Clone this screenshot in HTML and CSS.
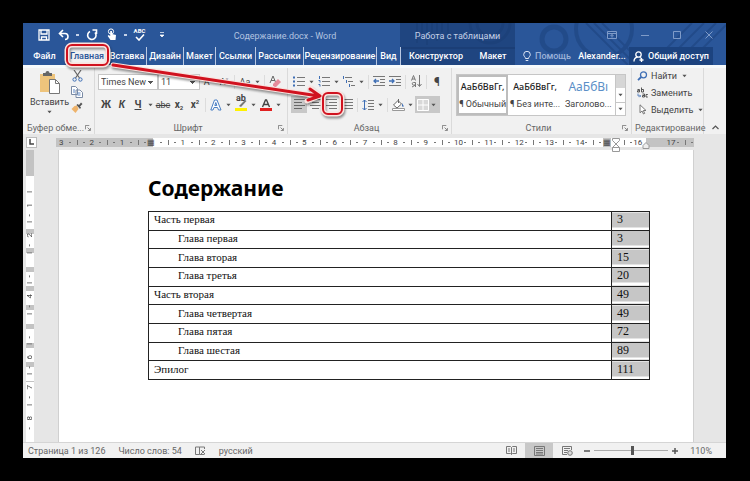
FILE: index.html
```
<!DOCTYPE html>
<html lang="ru">
<head>
    <meta charset="UTF-8">
    <meta name="viewport" content="width=device-width, initial-scale=1.0">
    <title>Содержание.docx - Word</title>
    <link rel="stylesheet" href="styles.css">
</head>
<body>
    <!-- Общие иконки -->
    <svg class="sprite" aria-hidden="true">
        <symbol id="down" viewBox="0 0 6 4"><path d="M0.5 0.5h5L3 3.5z" fill="#555"/></symbol>
        <symbol id="launcher" viewBox="0 0 7 7"><path d="M0.5 5V0.5H5M3 3l3 3M6.300 3.500v3h-3" fill="none" stroke="#777"/></symbol>
    </svg>

    <div class="window">
        <header class="header">
            <svg class="pattern" viewBox="0 0 326 42" aria-hidden="true">
                <g fill="none" stroke="#1e4480">
                    <path d="M17 0v20M22 0v14M27 0v22M32 0v12M37 0v18M42 0v9M48 0v16" stroke-width="2"/>
                    <path d="M70 0a20 20 0 0 0 40 0M77 0a13 13 0 0 0 26 0" stroke-width="3"/>
                    <circle cx="154" cy="16" r="12" stroke-width="5"/>
                    <circle cx="204" cy="6" r="28" stroke-width="4"/>
                    <path d="M186 0l42 42M194 0l42 42M202 0l42 42M250 42l42-42M262 42l42-42M274 42l42-42M286 42l40-40" stroke-width="2"/>
                </g>
            </svg>
            <div class="titlebar">
                <div class="quick">
                    <button aria-label="Сохранить"><svg width="12" height="12" viewBox="0 0 12 12"><path d="M1 1h10v10H1zM3 1v4h6V1M3.500 11V8h5v3" fill="none" stroke="#fff" stroke-width="1.300"/></svg></button>
                    <button aria-label="Отменить"><svg width="12" height="12" viewBox="0 0 12 12"><path d="M5 1L1.500 4.500 5 8M2 4.500h5a3 3 0 0 1 0 6" fill="none" stroke="#fff" stroke-width="1.600"/></svg></button>
                    <span class="dot"></span>
                    <button aria-label="Повторить"><svg width="12" height="12" viewBox="0 0 12 12"><path d="M4 2.500a4.200 4.200 0 1 0 5 1M6.500 1h4v4" fill="none" stroke="#fff" stroke-width="1.600"/></svg></button>
                    <button aria-label="Режим касания"><svg width="12" height="13" viewBox="0 0 12 13"><circle cx="5" cy="3.500" r="2.600" fill="none" stroke="#fff"/><path d="M4.200 3v5L2.500 7l-.8.9L4.500 12h5l.5-5-4-1V3z" fill="#fff"/></svg></button>
                    <span class="dot"></span>
                    <button class="spell" aria-label="Правописание">ABC<svg width="10" height="7" viewBox="0 0 10 7"><path d="M1 3l3 3 5-5.500" fill="none" stroke="#fff" stroke-width="1.600"/></svg></button>
                    <button class="more" aria-label="Настройка панели"><svg width="6" height="6" viewBox="0 0 6 6"><path d="M1 .5h4M1 3h4L3 5z" fill="#fff" stroke="#fff" stroke-width=".7"/></svg></button>
                </div>
                <h1 class="doc-title">Содержание.docx - Word</h1>
                <div class="context-title">Работа с таблицами</div>
                <div class="controls">
                    <button aria-label="Параметры ленты"><svg width="10" height="8" viewBox="0 0 10 8"><path d="M.5.5h9v7h-9zM.5 2.500h9M5 6.500v-3M3.500 5L5 3.500 6.500 5" fill="none" stroke="#7f9bc8"/></svg></button>
                    <button aria-label="Свернуть"><svg width="8" height="8" viewBox="0 0 8 8"><path d="M0 4.500h8" stroke="#7f9bc8"/></svg></button>
                    <button aria-label="Развернуть"><svg width="8" height="8" viewBox="0 0 8 8"><path d="M.5.5h7v7h-7z" fill="none" stroke="#7f9bc8"/></svg></button>
                    <button aria-label="Закрыть"><svg width="8" height="8" viewBox="0 0 8 8"><path d="M.5.5l7 7M7.500.5l-7 7" stroke="#7f9bc8"/></svg></button>
                </div>
            </div>
            <nav class="tabs">
                <button>Файл</button>
                <button class="active">Главная</button>
                <button class="line">Вставка</button>
                <button class="line">Дизайн</button>
                <button class="line">Макет</button>
                <button class="line">Ссылки</button>
                <button class="line">Рассылки</button>
                <button class="line">Рецензирование</button>
                <button class="line">Вид</button>
                <button class="context">Конструктор</button>
                <button class="context">Макет</button>
                <button class="help"><svg width="8" height="11" viewBox="0 0 8 11"><path d="M2.500 7.500C2.500 6 .7 5.500.7 3.600a3.300 3.300 0 0 1 6.600 0C7.300 5.500 5.500 6 5.500 7.500zM2.700 9.500h2.600" fill="none" stroke="#dfe7f5"/></svg>Помощь</button>
                <button>Alexander...</button>
                <button class="share"><svg width="11" height="11" viewBox="0 0 11 11"><circle cx="5.500" cy="3.500" r="2.700" fill="none" stroke="#fff" stroke-width="1.300"/><path d="M1 10.500c0-2.500 1.500-4 3.500-4.300M7 6.500l1.500 1M6.500 9h4M8.500 7v4" fill="none" stroke="#fff" stroke-width="1.300"/></svg>Общий доступ</button>
            </nav>
        </header>

        <section class="ribbon">
            <div class="group">
                <div class="clipboard">
                    <button class="paste">
                        <svg width="22" height="24" viewBox="0 0 22 24"><path d="M1 4h15v18H1z" fill="#eec47c"/><path d="M4 6V3h2.500a2 2 0 0 1 4 0H13v3z" fill="#666"/><path d="M10.500 9.500h6l4 4v10h-10z" fill="#fff" stroke="#777"/><path d="M16.500 9.500v4h4" fill="none" stroke="#777"/></svg>
                        Вставить
                        <svg class="arr"><use href="#down"/></svg>
                    </button>
                    <div class="clip-tools">
                        <button aria-label="Вырезать"><svg width="11" height="12" viewBox="0 0 11 12"><path d="M2 0l5.500 8M9 0L3.500 8" stroke="#666" stroke-width="1.200"/><circle cx="2.600" cy="9.500" r="1.700" fill="none" stroke="#3f6fb5"/><circle cx="8.400" cy="9.500" r="1.700" fill="none" stroke="#3f6fb5"/></svg></button>
                        <button aria-label="Копировать"><svg width="12" height="12" viewBox="0 0 12 12"><path d="M.5.500h4l2 2v6h-6zM5 4h4l2.500 2.500v5H5z" fill="#fff" stroke="#7a8ba5"/><path d="M2 4h2M2 6h2M6.500 7h3M6.500 9h3" stroke="#5b86c4"/></svg></button>
                        <button aria-label="Формат по образцу"><svg width="12" height="11" viewBox="0 0 12 11"><path d="M6 3.500L3.500 4 .5 7l4 4 3-4z" fill="#eeb36b"/><path d="M5.500 3l3.500 4 1-1.500-1-1L11.500 2 10 .5 8 3 6.500 2z" fill="#555"/></svg></button>
                    </div>
                </div>
                <div class="group-name"><span>Буфер обме...</span><svg class="launch"><use href="#launcher"/></svg></div>
            </div>

            <div class="group">
                <div class="rows">
                    <div class="row">
                        <select class="font-name" aria-label="Шрифт"><option>Times New Roman</option></select>
                        <select class="font-size" aria-label="Размер"><option>11</option></select>
                        <button class="tool" aria-label="Увеличить размер">А&#x2c4;</button>
                        <button class="tool" aria-label="Уменьшить размер">А&#x2c5;</button>
                        <span class="sep"></span>
                        <button class="tool" aria-label="Регистр">Аа</button>
                        <svg class="arr"><use href="#down"/></svg>
                        <span class="sep"></span>
                        <button class="tool" aria-label="Очистить форматирование"><svg width="13" height="13" viewBox="0 0 13 13"><path d="M1 8L4 1l2.500 6M2 5.500h4" fill="none" stroke="#666"/><path d="M4 9l5-5 3 3-5 5H5.500L4 10.500z" fill="#e58b9b"/></svg></button>
                    </div>
                    <div class="row">
                        <button class="tool bold">Ж</button>
                        <button class="tool bold italic">К</button>
                        <button class="tool bold under">Ч</button>
                        <svg class="arr"><use href="#down"/></svg>
                        <button class="tool strike">abc</button>
                        <button class="tool bold">x<sub>2</sub></button>
                        <button class="tool bold">x<sup>2</sup></button>
                        <span class="sep"></span>
                        <button class="tool" aria-label="Эффекты"><svg width="12" height="12" viewBox="0 0 12 12"><path d="M.8 11L4.500 1h2.500l4 10H8.500l-1-2.500H4L3 11zM4.800 6.500h2L5.800 3.500z" fill="#fff" stroke="#4a7fc4"/></svg></button>
                        <svg class="arr"><use href="#down"/></svg>
                        <button class="tool marker" aria-label="Цвет выделения">ab<svg width="12" height="12" viewBox="0 0 12 12"><path d="M4 7l6-6 1.500 1L6 8z" fill="#777"/><path d="M0 9h12v3H0z" fill="#fff200"/></svg></button>
                        <svg class="arr"><use href="#down"/></svg>
                        <button class="tool" aria-label="Цвет текста"><svg width="12" height="12" viewBox="0 0 12 12"><path d="M2.500 8L5.500 1h1L9.500 8M3.500 5.500h5" fill="none" stroke="#444" stroke-width="1.400"/><path d="M0 9h12v3H0z" fill="#e02020"/></svg></button>
                        <svg class="arr"><use href="#down"/></svg>
                    </div>
                </div>
                <div class="group-name"><span>Шрифт</span><svg class="launch"><use href="#launcher"/></svg></div>
            </div>

            <div class="group">
                <div class="rows">
                    <div class="row">
                        <button class="tool" aria-label="Маркеры"><svg width="12" height="11" viewBox="0 0 12 11"><path d="M0 1.500h2M0 5.500h2M0 9.500h2" stroke="#3f6fb5" stroke-width="2"/><path d="M4 1.500h8M4 5.500h8M4 9.500h8" stroke="#777"/></svg></button>
                        <svg class="arr"><use href="#down"/></svg>
                        <button class="tool" aria-label="Нумерация"><svg width="12" height="11" viewBox="0 0 12 11"><path d="M1.500 0v3M.5 4.500h1.500v2M.5 8.500h1.500v2" fill="none" stroke="#3f6fb5"/><path d="M4 1.500h8M4 5.500h8M4 9.500h8" stroke="#777"/></svg></button>
                        <svg class="arr"><use href="#down"/></svg>
                        <button class="tool" aria-label="Многоуровневый список"><svg width="12" height="11" viewBox="0 0 12 11"><path d="M.5 0v3M3.500 4v3M6.500 8v3" stroke="#3f6fb5"/><path d="M2 1.500h7M5 5.500h5M8 9.500h4" stroke="#777"/></svg></button>
                        <svg class="arr"><use href="#down"/></svg>
                        <span class="sep"></span>
                        <button class="tool" aria-label="Уменьшить отступ"><svg width="12" height="11" viewBox="0 0 12 11"><path d="M0 .5h12M7 3.500h5M7 6.500h5M0 9.500h12" stroke="#777"/><path d="M6 5H1M3 3L1 5l2 2" fill="none" stroke="#3f6fb5" stroke-width="1.300"/></svg></button>
                        <button class="tool" aria-label="Увеличить отступ"><svg width="12" height="11" viewBox="0 0 12 11"><path d="M0 .5h12M7 3.500h5M7 6.500h5M0 9.500h12" stroke="#777"/><path d="M0 5h5M3 3l2 2-2 2" fill="none" stroke="#3f6fb5" stroke-width="1.300"/></svg></button>
                        <span class="sep"></span>
                        <button class="tool" aria-label="Сортировка"><svg width="11" height="13" viewBox="0 0 11 13"><path d="M.5 5.500L2.500.5l2 5M1 4h3M4.500 12V7.500H2.500a1.200 1.200 0 0 0 0 2.500h2L1 12" fill="none" stroke="#777"/><path d="M8.500 0v11M6.500 9l2 2.500 2-2.500" fill="none" stroke="#777"/></svg></button>
                        <span class="sep"></span>
                        <button class="tool pilcrow">¶</button>
                    </div>
                    <div class="row">
                        <button class="tool pressed" aria-label="По левому краю"><svg width="11" height="11" viewBox="0 0 11 11"><path d="M0 .5h11M0 3.500h8M0 6.500h11M0 9.500h8" stroke="#666"/></svg></button>
                        <button class="tool" aria-label="По центру"><svg width="11" height="11" viewBox="0 0 11 11"><path d="M0 .5h11M2 3.500h7M0 6.500h11M2 9.500h7" stroke="#777"/></svg></button>
                        <button class="tool" aria-label="По правому краю"><svg width="11" height="11" viewBox="0 0 11 11"><path d="M0 .5h11M3 3.500h8M0 6.500h11M3 9.500h8" stroke="#777"/></svg></button>
                        <button class="tool" aria-label="По ширине"><svg width="11" height="11" viewBox="0 0 11 11"><path d="M0 .5h11M0 3.500h11M0 6.500h11M0 9.500h11" stroke="#777"/></svg></button>
                        <span class="sep"></span>
                        <button class="tool" aria-label="Интервал"><svg width="12" height="12" viewBox="0 0 12 12"><path d="M2.500 1v10M.5 3l2-2 2 2M.5 9l2 2 2-2" fill="none" stroke="#3f6fb5"/><path d="M6 1.500h6M6 4.500h6M6 7.500h6M6 10.500h6" stroke="#777"/></svg></button>
                        <svg class="arr"><use href="#down"/></svg>
                        <span class="sep"></span>
                        <button class="tool" aria-label="Заливка"><svg width="13" height="12" viewBox="0 0 13 12"><path d="M6 1.500L1.500 6l3.500 3L9.500 5zM6.500 0v4" fill="#fff" stroke="#666"/><path d="M10 4l2 3.500h-2z" fill="#3f6fb5"/><path d="M.5 9.500h12v2H.5z" fill="#fff" stroke="#999"/></svg></button>
                        <svg class="arr"><use href="#down"/></svg>
                        <button class="tool pressed borders" aria-label="Границы"><svg width="12" height="12" viewBox="0 0 12 12"><path d="M0 0h12v12H0z" fill="#d8d8d8"/><path d="M.5.500h11v11H.5zM6 1v10M1 6h10" fill="none" stroke="#fff"/></svg><svg class="arr"><use href="#down"/></svg></button>
                    </div>
                </div>
                <div class="group-name"><span>Абзац</span><svg class="launch"><use href="#launcher"/></svg></div>
            </div>

            <div class="group">
                <div class="gallery">
                    <button class="style selected"><b>АаБбВвГг,</b><span>¶ Обычный</span></button>
                    <button class="style"><b>АаБбВвГг,</b><span>¶ Без инте...</span></button>
                    <button class="style heading"><b>АаБбВı</b><span>Заголово...</span></button>
                    <div class="gallery-scroll">
                        <button disabled aria-label="Вверх"></button>
                        <button aria-label="Вниз"><svg class="arr"><use href="#down"/></svg></button>
                        <button class="all" aria-label="Все стили"><svg class="arr"><use href="#down"/></svg></button>
                    </div>
                </div>
                <div class="group-name"><span>Стили</span><svg class="launch"><use href="#launcher"/></svg></div>
            </div>

            <div class="group">
                <div class="editing">
                    <button><svg width="11" height="10" viewBox="0 0 11 10"><circle cx="6.500" cy="3.800" r="3" fill="none" stroke="#3f6fb5" stroke-width="1.300"/><path d="M4.200 6L1 9.200" stroke="#3f6fb5" stroke-width="1.800"/></svg>Найти<svg class="arr"><use href="#down"/></svg></button>
                    <button><svg width="11" height="11" viewBox="0 0 11 11"><path d="M.5 2.500h2v2.500h-2V3.700h2M4.500.500V5h2V2.500h-2M5.500 7h2v3h-2V8.500h2M10.800 7.500H9v2.500h1.800" fill="none" stroke="#555"/><path d="M1 6.500V9h2.500M2.500 7.800L3.700 9 2.500 10.200" fill="none" stroke="#3f6fb5" stroke-width=".8"/></svg>Заменить</button>
                    <button><svg width="11" height="11" viewBox="0 0 11 11"><path d="M3 .8v8l2-1.800 1.500 3 1.200-.6-1.400-2.900h2.700z" fill="#fff" stroke="#777"/></svg>Выделить<svg class="arr"><use href="#down"/></svg></button>
                </div>
                <div class="group-name"><span>Редактирование</span></div>
            </div>

            <button class="collapse" aria-label="Свернуть ленту"><svg width="7" height="5" viewBox="0 0 7 5"><path d="M.5 4l3-3 3 3" fill="none" stroke="#555" stroke-width="1.200"/></svg></button>
        </section>

        <div class="ruler-bar">
            <span class="corner"><svg width="6" height="6" viewBox="0 0 6 6"><path d="M1 0v5h4" fill="none" stroke="#444" stroke-width="1.500"/></svg></span>
            <div class="ruler">
                <span class="out">3</span><span class="out">2</span><span class="out">1</span><span class="zero">▦</span>
                <span>1</span><span>2</span><span>3</span><span>4</span><span>5</span><span>6</span><span>7</span><span>8</span><span>9</span><span>10</span><span>11</span><span>12</span><span>13</span><span>14</span><span class="column">▦<svg class="indent" viewBox="0 0 8 14"><path d="M.5.5h7v2L4 6 .5 2.500zM4 6l3.500 3.500v4h-7v-4zM.5 9.500h7" fill="#fff" stroke="#999"/></svg></span><span class="edge">16<svg class="indent" viewBox="0 0 8 14"><path d="M4 4.500l3 3v3H1v-3z" fill="#eee" stroke="#999"/></svg></span><span class="out">17</span>
            </div>
        </div>

        <main class="work">
            <div class="vruler">
                <div class="row-marks"></div>
                <span class="top"></span>
                <span>1</span><span>2</span><span></span><span>4</span><span></span><span>6</span><span>7</span><span>8</span>
            </div>
            <article class="page">
                <h2>Содержание</h2>
                <table class="toc">
                    <tr><td>Часть первая</td><td class="num">3</td></tr>
                    <tr><td class="sub">Глава первая</td><td class="num">3</td></tr>
                    <tr><td class="sub">Глава вторая</td><td class="num">15</td></tr>
                    <tr><td class="sub">Глава третья</td><td class="num">20</td></tr>
                    <tr><td>Часть вторая</td><td class="num">49</td></tr>
                    <tr><td class="sub">Глава четвертая</td><td class="num">49</td></tr>
                    <tr><td class="sub">Глава пятая</td><td class="num">72</td></tr>
                    <tr><td class="sub">Глава шестая</td><td class="num">89</td></tr>
                    <tr><td>Эпилог</td><td class="num">111</td></tr>
                </table>
            </article>
        </main>

        <footer class="status">
            <span>Страница 1 из 126</span>
            <span>Число слов: 54</span>
            <svg width="11" height="10" viewBox="0 0 11 10"><path d="M.5 1h4v7.500h-4zM4.500 1h5v2M4.500 8.500h5M6 4l4 4M10 4L6 8" fill="none" stroke="#777"/></svg>
            <span>русский</span>
            <div class="views">
                <button aria-label="Режим чтения"><svg width="11" height="9" viewBox="0 0 11 9"><path d="M.5.500h4l1 1 1-1h4v7h-4l-1 1-1-1h-4zM5.500 1.500v7M2 3h2M2 5h2M7 3h2M7 5h2" fill="none" stroke="#777"/></svg></button>
                <button class="on" aria-label="Разметка страницы"><svg width="11" height="10" viewBox="0 0 11 10"><path d="M.5.500h10v9H.5zM2 2.500h7M2 4.500h7M2 6.500h7M2 8h7" fill="none" stroke="#777"/></svg></button>
                <button aria-label="Веб-документ"><svg width="11" height="10" viewBox="0 0 11 10"><path d="M5 8.500H.5v-8h9V4M2 2.500h6M2 4.500h4M2 6.500h3" fill="none" stroke="#777"/><circle cx="8" cy="7" r="2.300" fill="#ddd" stroke="#777"/></svg></button>
            </div>
            <div class="zoom">
                <button aria-label="Уменьшить"><svg width="6" height="6" viewBox="0 0 6 6"><path d="M0 3h6" stroke="#555" stroke-width="1.500"/></svg></button>
                <input type="range" min="0" max="100" value="52" aria-label="Масштаб">
                <button aria-label="Увеличить"><svg width="6" height="6" viewBox="0 0 6 6"><path d="M0 3h6M3 0v6" stroke="#555" stroke-width="1.500"/></svg></button>
                <span>110%</span>
            </div>
        </footer>

        <!-- Подсказка: рамки и стрелка поверх окна -->
        <svg class="hint" width="340" height="110" viewBox="0 0 340 110" aria-hidden="true">
            <g fill="none" stroke-linecap="round" stroke-linejoin="round">
                <g stroke="#fbe3df" stroke-width="5">
                    <rect x="44" y="22" width="41" height="20" rx="5"/>
                    <rect x="300" y="70" width="19" height="21" rx="5"/>
                    <path d="M90 42L296 73M287 65l10 8-13 5"/>
                </g>
                <g stroke="#d0121f" stroke-width="2">
                    <rect x="44" y="22" width="41" height="20" rx="5"/>
                    <rect x="300" y="70" width="19" height="21" rx="5"/>
                    <path d="M90 42L296 73M287 66l10 7-12 4" stroke-width="3"/>
                </g>
            </g>
        </svg>
    </div>
</body>
</html>
```
FILE: styles.css
```
* {
    box-sizing: border-box;
    margin: 0;
    padding: 0;
}

body {
    background: #000;
    min-height: 100vh;
    padding: 23px 24px 23px 23px;
    display: flex;
    font-family: Roboto, "Noto Sans", sans-serif;
    font-size: 9px;
    line-height: 12px;
    color: #444;
}

button, select, input {
    font: inherit;
    color: inherit;
    background: none;
    border: none;
}

button {
    display: flex;
    align-items: center;
    justify-content: center;
    white-space: nowrap;
}

svg {
    flex: none;
}

.sprite {
    position: absolute;
    width: 0;
    height: 0;
}

.window {
    flex: 1;
    min-width: 0;
    display: flex;
    flex-direction: column;
    position: relative;
    background: #e6e6e6;
}

/* Заголовок и вкладки */
.header {
    position: relative;
    background: #2a5699;
    color: #fff;
}

.pattern {
    position: absolute;
    right: 0;
    top: 0;
    width: 326px;
    height: 42px;
    opacity: 0.6;
}

.titlebar, .tabs {
    position: relative;
    display: grid;
}

.titlebar {
    grid-template-columns: 158fr 219fr 115fr 211fr;
    height: 24px;
}

.quick {
    display: flex;
    align-items: center;
    gap: 5px;
    padding: 0 0 3px 13px;
}

.quick button {
    width: 15px;
}

.quick .more {
    margin-left: 2px;
}

.quick .spell {
    flex-direction: column;
    font-size: 6px;
    line-height: 6px;
    font-weight: bold;
}

.dot {
    width: 3px;
    height: 2px;
    background: #c5d2e8;
}

.doc-title {
    font-size: 9px;
    font-weight: normal;
    line-height: 26px;
    text-align: center;
    padding-right: 11px;
    color: #b3c4e0;
}

.context-title {
    background: rgba(25, 58, 112, 0.6);
    line-height: 26px;
    text-align: center;
    color: #c3d0e6;
}

.controls {
    display: flex;
    align-items: center;
    justify-content: flex-end;
    gap: 24px;
    padding: 0 13px 2px 0;
}

.tabs {
    grid-template-columns: 43fr 42fr 39fr 37fr 32fr 40fr 48fr 73fr 24fr 70fr 44fr 60fr 54fr 84fr 13fr;
    height: 18px;
}

.tabs button {
    min-width: 0;
    font-weight: 500;
}

.tabs .active {
    background: #f1f1f1;
    color: #2a5699;
}

.tabs .line {
    border-right: 1px solid #b9c8e2;
}

.tabs .context {
    background: rgba(25, 58, 112, 0.6);
}

.tabs .help {
    gap: 4px;
    padding-left: 8px;
    justify-content: flex-start;
    color: #9db3d8;
}

.tabs .share {
    background: #1c437f;
    gap: 4px;
}

/* Лента */
.ribbon {
    display: grid;
    grid-template-columns: 72fr 193fr 164fr 180fr 72fr 22fr;
    background: #f1f1f1;
    border-top: 3px solid #f6fafc;
    height: 69px;
}

.group {
    display: flex;
    flex-direction: column;
    min-width: 0;
    border-right: 1px solid #dadada;
}

.group-name {
    display: flex;
    align-items: center;
    color: #666;
    margin-top: auto;
    padding: 0 3px;
}

.group-name span {
    flex: 1;
    text-align: center;
    white-space: nowrap;
}

.launch {
    width: 6px;
    height: 6px;
}

.arr {
    width: 5px;
    height: 4px;
    margin: 0 2px;
}

.clipboard {
    display: flex;
    padding: 2px 7px 0 7px;
    justify-content: space-between;
}

.paste {
    flex-direction: column;
    gap: 2px;
}

.clip-tools {
    display: flex;
    flex-direction: column;
    gap: 4px;
    padding-right: 4px;
}

.rows {
    display: flex;
    flex-direction: column;
    gap: 6px;
    padding: 5px 0 0 3px;
}

.row {
    display: flex;
    align-items: center;
    height: 17px;
}

.tool {
    width: 16px;
    height: 17px;
    flex: none;
}

.pressed {
    background: #c8c8c8;
}

.borders {
    width: 25px;
}

.pilcrow {
    font-size: 12px;
}

.sep {
    width: 1px;
    height: 14px;
    margin: 0 2px;
    background: #dcdcdc;
}

.bold {
    font-size: 10px;
    font-weight: bold;
}

.italic {
    font-style: italic;
}

.under {
    text-decoration: underline;
}

.strike {
    text-decoration: line-through;
}

.tool sub, .tool sup {
    font-size: 6px;
    line-height: 6px;
}

.tool sub {
    padding-top: 6px;
}

.tool sup {
    padding-bottom: 6px;
}

.marker {
    display: grid;
    align-content: start;
    justify-items: center;
    grid-template-rows: 3px 12px;
    font-weight: bold;
    line-height: 10px;
}

.font-name, .font-size {
    appearance: none;
    height: 16px;
    border: 1px solid #c6c6c6;
    background:
        linear-gradient(#555, #555) right 4px top 6px / 5px 1px no-repeat,
        linear-gradient(#555, #555) right 5px top 7px / 3px 1px no-repeat,
        linear-gradient(#555, #555) right 6px top 8px / 1px 1px no-repeat,
        #fff;
    padding: 0 10px 0 2px;
}

.font-name {
    width: 60px;
}

.font-size {
    width: 42px;
}

.gallery {
    display: grid;
    grid-template-columns: 52fr 54fr 54fr 10fr;
    margin: 6px 5px 0 4px;
    height: 42px;
    background: #fff;
    border: 1px solid #c6c6c6;
}

.style {
    flex-direction: column;
    gap: 5px;
    min-width: 0;
}

.style b {
    font-family: "Noto Sans", sans-serif;
    font-weight: 500;
    color: #222;
}

.selected {
    border: 2px solid #bdbdbd;
}

.style.heading b {
    font-size: 12px;
    font-weight: normal;
    color: #5b8fc7;
}

.gallery-scroll {
    display: grid;
    grid-template-rows: 1fr 1fr 1fr;
    border-left: 1px solid #c6c6c6;
}

.gallery-scroll button:disabled {
    background: #d6d6d6;
}

.gallery-scroll .all {
    border-top: 1px solid #c6c6c6;
}

.editing {
    display: flex;
    flex-direction: column;
    gap: 4px;
    padding: 1px 0 0 5px;
}

.editing button {
    justify-content: flex-start;
    gap: 3px;
    height: 13px;
}

.collapse {
    align-self: end;
    height: 14px;
}

/* Линейки */
.ruler-bar {
    display: flex;
    align-items: center;
    height: 16px;
    padding: 0 32px 0 3px;
}

.corner {
    display: flex;
    align-items: center;
    justify-content: center;
    width: 11px;
    height: 11px;
    background: #fff;
    border: 1px solid #bbb;
}

.ruler {
    flex: 1;
    display: grid;
    grid-template-columns: repeat(21, 1fr);
    margin-left: 19px;
    height: 9px;
    font-size: 8px;
    line-height: 9px;
}

.ruler span {
    position: relative;
    min-width: 0;
    padding-left: 3px;
    background:
        linear-gradient(#777, #777) 13px 4px / 2px 1px no-repeat,
        linear-gradient(#777, #777) 21px 2px / 1px 5px no-repeat,
        linear-gradient(#777, #777) 27px 4px / 2px 1px no-repeat,
        #fff;
}

.ruler .out {
    background-color: #c3c3c3;
}

.ruler .zero {
    padding-left: 0;
    box-shadow: inset 6px 0 #c3c3c3;
}

.ruler .column {
    padding-left: 0;
    box-shadow: inset 8px 0 #c3c3c3;
}

.ruler .edge {
    padding-left: 0;
    box-shadow: inset -18px 0 #c3c3c3;
}

.indent {
    position: absolute;
    left: 9px;
    top: 0;
    width: 8px;
    height: 14px;
}

.work {
    flex: 1;
    display: flex;
    padding: 0 32px 0 3px;
}

.vruler {
    position: relative;
    display: flex;
    flex-direction: column;
    width: 8px;
    margin-right: 24px;
    padding-bottom: 8px;
    background: #fff;
}

.vruler span {
    position: relative;
    flex: 1;
    writing-mode: vertical-rl;
    transform: rotate(180deg);
    text-align: right;
    font-size: 8px;
    line-height: 8px;
    padding-bottom: 12px;
    background:
        linear-gradient(#777, #777) 4px 5px / 1px 2px no-repeat,
        linear-gradient(#777, #777) 2px 29px / 5px 1px no-repeat;
}

.vruler .top {
    flex: none;
    transform: none;
    height: 41px;
    background: linear-gradient(#c3c3c3 26px, transparent 0);
}

.row-marks {
    position: absolute;
    inset: 79px 0 60px 0;
    background: repeating-linear-gradient(#c3c3c3 0 5px, transparent 0 19px);
}

.page {
    flex: 1;
    background: #fff;
    border-left: 1px solid #d0d0d0;
    border-right: 1px solid #d0d0d0;
    padding: 24px 43px 0 89px;
    color: #111;
}

.page h2 {
    font-family: "Noto Sans", sans-serif;
    font-size: 21px;
    line-height: 29px;
    color: #000;
    margin-bottom: 8px;
}

.toc {
    width: 100%;
    height: 169px;
    border-collapse: collapse;
    font-family: "Liberation Serif", serif;
    font-size: 11px;
}

.toc td {
    border: 1px solid #222;
    padding: 0 5px 3px;
}

.toc .sub {
    padding-left: 29px;
}

.toc .num {
    width: 38px;
    font-size: 12px;
    background: linear-gradient(#c6c6c6 15px, #fff 0);
}

/* Строка состояния */
.status {
    display: flex;
    align-items: center;
    gap: 13px;
    height: 16px;
    padding: 0 14px 0 5px;
    background: #f1f1f1;
    border-top: 1px solid #d5d5d5;
    color: #666;
}

.views {
    display: flex;
    margin-left: auto;
    align-self: stretch;
}

.views button {
    width: 28px;
}

.views .on {
    background: #c8c8c8;
}

.zoom {
    display: flex;
    align-items: center;
    gap: 4px;
    margin-left: -10px;
}

.zoom input {
    appearance: none;
    width: 74px;
    height: 9px;
    background: linear-gradient(#aaa, #aaa) center / 100% 1px no-repeat;
}

.zoom input::-webkit-slider-thumb {
    appearance: none;
    width: 3px;
    height: 9px;
    background: #555;
}

.zoom span {
    margin-left: 8px;
}

.hint {
    position: absolute;
    left: 0;
    top: 0;
    filter: drop-shadow(1px 2px 1px rgba(0, 0, 0, 0.4));
}
```
